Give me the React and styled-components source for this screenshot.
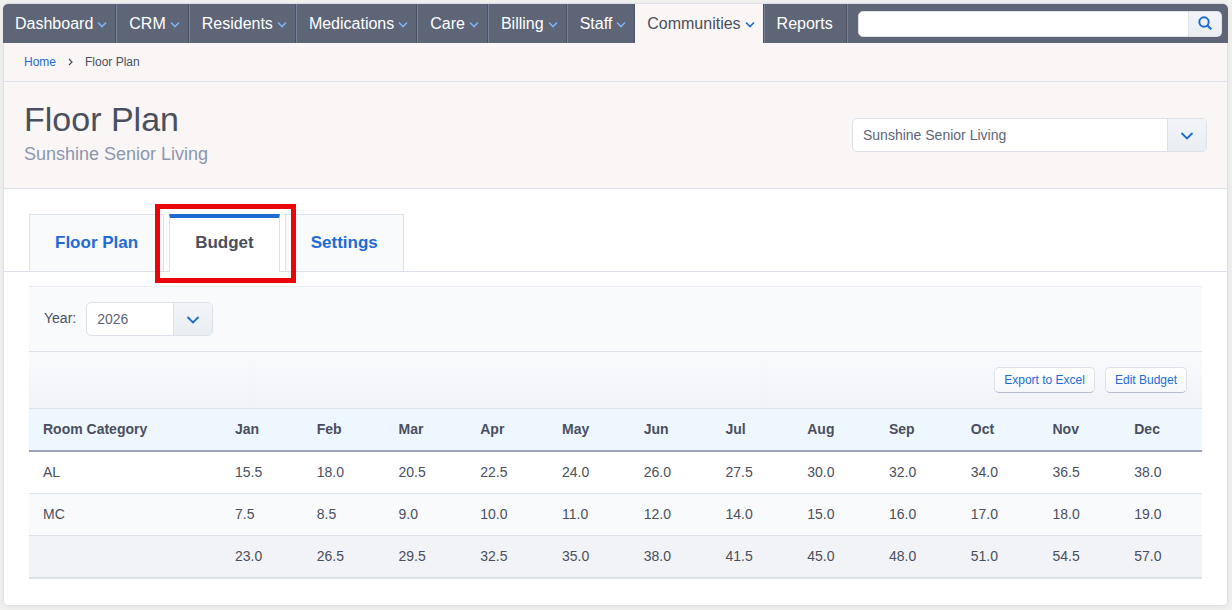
import React, { useState } from "react";
import styled, { createGlobalStyle } from "styled-components";

const GlobalStyle = createGlobalStyle`
  * {
    box-sizing: border-box;
  }

  body {
    margin: 0;
    background: #f1f1ef;
    color: #4a4f5e;
    font-family: "Liberation Sans", Arial, sans-serif;
    font-size: 14px;
    line-height: 20px;
  }

  button,
  input,
  select {
    margin: 0;
    font-family: inherit;
  }
`;

const Page = styled.div`
  padding: 3px 4px 4px 3px;
`;

const Panel = styled.div`
  background: #fff;
  border-radius: 5px;
  box-shadow: inset 0 0 0 1px #dde1e9, 0 1px 6px rgba(0, 0, 0, 0.06);
  padding: 1px 1px 27px;
`;

const Nav = styled.nav`
  display: flex;
  height: 39px;
  margin: 0 -1px;
  background: #5d6577;
  border-radius: 5px 5px 0 0;
`;

const NavItem = styled.a`
  display: flex;
  align-items: center;
  gap: 4px;
  padding: 0 ${props => (props.$plain ? "13px" : "8px")} 0 12px;
  border-left: ${props => (props.$active ? "0" : "1px solid #75809a")};
  border-right: 1px solid #4b5263;
  background: ${props => (props.$active ? "#faf6f5" : "transparent")};
  color: ${props => (props.$active ? "#4a4f5e" : "#fff")};
  font-size: 16px;
  text-decoration: none;

  &:first-child {
    border-left: 0;
  }

  svg {
    color: ${props => (props.$active ? "#1f6bd6" : "#7fb2f5")};
  }
`;

const Search = styled.form`
  display: flex;
  flex: 1;
  align-items: center;
  padding: 0 6px 0 10px;
  border-left: 1px solid #75809a;
`;

const SearchInput = styled.input`
  flex: 1;
  min-width: 0;
  height: 26px;
  padding: 0 8px;
  border: 1px solid #dde1e9;
  border-radius: 5px 0 0 5px;
  background: #fff;
  font-size: 14px;
`;

const SearchButton = styled.button`
  display: flex;
  align-items: center;
  justify-content: center;
  width: 33px;
  height: 26px;
  padding: 0 0 2px;
  border: 1px solid #dde1e9;
  border-left: 0;
  border-radius: 0 5px 5px 0;
  background: linear-gradient(#f2f4f8, #e9eef3);
  color: #1f6bd6;
`;

const Breadcrumb = styled.div`
  display: flex;
  align-items: center;
  gap: 12px;
  height: 39px;
  padding: 0 20px;
  border-bottom: 1px solid #dde1e9;
  background: #faf6f5;
  font-size: 12px;

  a {
    color: #1f6bd6;
    text-decoration: none;
  }
`;

const Header = styled.header`
  display: flex;
  align-items: center;
  justify-content: space-between;
  height: 107px;
  padding: 0 20px;
  border-bottom: 1px solid #dde1e9;
  background: #faf6f5;
`;

const Title = styled.h1`
  margin: 0;
  font-size: 34px;
  font-weight: normal;
  line-height: 40px;
`;

const Subtitle = styled.p`
  margin: 0;
  padding-bottom: 2px;
  color: #8c97ae;
  font-size: 18px;
  line-height: 30px;
`;

const SelectBox = styled.div`
  display: grid;
  grid-template-columns: 1fr 39px;
  width: ${props => props.$width};
  height: 34px;
  border: 1px solid #dde1e9;
  border-radius: 5px;
  background: #fff;
  overflow: hidden;

  select {
    grid-area: 1 / 1 / 2 / 3;
    min-width: 0;
    padding: 0 49px 0 10px;
    border: 0;
    background: transparent;
    color: #5d6577;
    font-size: 14px;
    appearance: none;
  }
`;

const Caret = styled.span`
  grid-area: 1 / 2 / 2 / 3;
  display: flex;
  align-items: center;
  justify-content: center;
  border-left: 1px solid #dde1e9;
  background: linear-gradient(#f2f4f8, #e9eef3);
  color: #1f6bd6;
  pointer-events: none;
`;

const Tabs = styled.div`
  display: flex;
  gap: 5px;
  padding: 25px 25px 0;
  border-bottom: 1px solid #dde1e9;
`;

const Tab = styled.a`
  position: relative;
  height: ${props => (props.$active ? "58px" : "57px")};
  margin-bottom: ${props => (props.$active ? "-1px" : "0")};
  padding: ${props => (props.$active ? "15px" : "18px")} 25px 0;
  border: 1px solid #dde1e9;
  border-top: ${props => (props.$active ? "4px solid #1f6bd6" : "1px solid #dde1e9")};
  border-bottom: 0;
  background: ${props => (props.$active ? "#fff" : "#f8fafc")};
  color: ${props => (props.$active ? "#4a4f5e" : "#1f6bd6")};
  font-size: 17px;
  font-weight: bold;
  text-decoration: none;
`;

const Highlight = styled.span`
  position: absolute;
  z-index: 1;
  inset: -14px -17px -11px -15px;
  border: 5px solid #ea0606;
  pointer-events: none;
`;

const Content = styled.main`
  padding: 14px 25px 0;
`;

const Filters = styled.div`
  display: flex;
  align-items: center;
  gap: 10px;
  height: 66px;
  padding: 0 15px;
  border-top: 1px solid #e9edf3;
  border-bottom: 1px solid #dde1e9;
  background: #f8fafc;

  label {
    padding-bottom: 2px;
  }
`;

const Toolbar = styled.div`
  display: flex;
  align-items: center;
  justify-content: flex-end;
  gap: 10px;
  height: 57px;
  padding: 0 15px;
  border-bottom: 1px solid #dde1e9;
  background: linear-gradient(#f8fafc, #f2f3f7);
`;

const Button = styled.button`
  height: 26px;
  padding: 0 9px;
  border: 1px solid #dde1e9;
  border-bottom-color: #b4bccd;
  border-radius: 5px;
  background: linear-gradient(#fff, #f5f7fa);
  color: #1f6bd6;
  font-size: 12px;
`;

const Table = styled.table`
  width: 100%;
  border-collapse: separate;
  border-spacing: 0;
  table-layout: fixed;

  th,
  td {
    height: 42px;
    padding: 0 0 2px 14px;
    border-bottom: 1px solid #dde1e9;
    text-align: left;
  }

  th:first-child {
    width: 192px;
  }

  thead th {
    height: 43px;
    border-bottom: 2px solid #9aa5bd;
    background: #eef7fe;
  }

  tbody tr:nth-child(even) {
    background: #f8fafc;
  }

  tfoot td {
    height: 43px;
    border-bottom: 2px solid #dde1e9;
    background: #f2f3f7;
  }
`;

const NavChevron = () => (
  <svg width="10" height="10" viewBox="0 0 10 10" fill="none" aria-hidden="true">
    <path d="M1 3.5l4 4 4-4" stroke="currentColor" strokeWidth="1.6" />
  </svg>
);

const SelectChevron = () => (
  <svg width="14" height="14" viewBox="0 0 14 14" fill="none" aria-hidden="true">
    <path d="M1.5 5L7 10.5 12.5 5" stroke="currentColor" strokeWidth="1.8" />
  </svg>
);

const navItems = [
  "Dashboard",
  "CRM",
  "Residents",
  "Medications",
  "Care",
  "Billing",
  "Staff",
  "Communities",
  "Reports"
];

const tabs = ["Floor Plan", "Budget", "Settings"];

const months = [
  "Jan", "Feb", "Mar", "Apr", "May", "Jun",
  "Jul", "Aug", "Sep", "Oct", "Nov", "Dec"
];

const rooms = [
  { name: "AL", values: [15.5, 18, 20.5, 22.5, 24, 26, 27.5, 30, 32, 34, 36.5, 38] },
  { name: "MC", values: [7.5, 8.5, 9, 10, 11, 12, 14, 15, 16, 17, 18, 19] }
];

const App = () => {
  const [year, setYear] = useState("2026");
  const [query, setQuery] = useState("");

  const totals = months.map((month, index) =>
    rooms.reduce((sum, room) => sum + room.values[index], 0)
  );

  return (
    <Page>
      <GlobalStyle />
      <Panel>
        <Nav>
          {navItems.map(item => (
            <NavItem
              href="#"
              key={item}
              $active={item === "Communities"}
              $plain={item === "Reports"}
            >
              {item}
              {item !== "Reports" && <NavChevron />}
            </NavItem>
          ))}
          <Search onSubmit={e => e.preventDefault()}>
            <SearchInput
              type="text"
              aria-label="Search"
              value={query}
              onChange={e => setQuery(e.target.value)}
            />
            <SearchButton type="submit" aria-label="Search">
              <svg width="14" height="14" viewBox="0 0 14 14" fill="none" aria-hidden="true">
                <circle cx="6" cy="6" r="4.7" stroke="currentColor" strokeWidth="2" />
                <path d="M9 9l4.3 4.3" stroke="currentColor" strokeWidth="2.2" />
              </svg>
            </SearchButton>
          </Search>
        </Nav>

        <Breadcrumb>
          <a href="#">Home</a>
          <svg width="5" height="8" viewBox="0 0 5 8" fill="none" aria-hidden="true">
            <path d="M1 1l3 3-3 3" stroke="currentColor" strokeWidth="1.2" />
          </svg>
          <span>Floor Plan</span>
        </Breadcrumb>

        <Header>
          <div>
            <Title>Floor Plan</Title>
            <Subtitle>Sunshine Senior Living</Subtitle>
          </div>
          <SelectBox $width="355px">
            <select aria-label="Community">
              <option>Sunshine Senior Living</option>
            </select>
            <Caret>
              <SelectChevron />
            </Caret>
          </SelectBox>
        </Header>

        <Tabs>
          {tabs.map(tab => (
            <Tab href="#" key={tab} $active={tab === "Budget"}>
              {tab}
              {tab === "Budget" && <Highlight />}
            </Tab>
          ))}
        </Tabs>

        <Content>
          <Filters>
            <label htmlFor="year">Year:</label>
            <SelectBox $width="127px">
              <select id="year" value={year} onChange={e => setYear(e.target.value)}>
                <option>2025</option>
                <option>2026</option>
                <option>2027</option>
              </select>
              <Caret>
                <SelectChevron />
              </Caret>
            </SelectBox>
          </Filters>
          <Toolbar>
            <Button type="button">Export to Excel</Button>
            <Button type="button">Edit Budget</Button>
          </Toolbar>
          <Table>
            <thead>
              <tr>
                <th>Room Category</th>
                {months.map(month => (
                  <th key={month}>{month}</th>
                ))}
              </tr>
            </thead>
            <tbody>
              {rooms.map(room => (
                <tr key={room.name}>
                  <td>{room.name}</td>
                  {room.values.map((value, index) => (
                    <td key={index}>{value.toFixed(1)}</td>
                  ))}
                </tr>
              ))}
            </tbody>
            <tfoot>
              <tr>
                <td />
                {totals.map((total, index) => (
                  <td key={index}>{total.toFixed(1)}</td>
                ))}
              </tr>
            </tfoot>
          </Table>
        </Content>
      </Panel>
    </Page>
  );
};

export default App;
